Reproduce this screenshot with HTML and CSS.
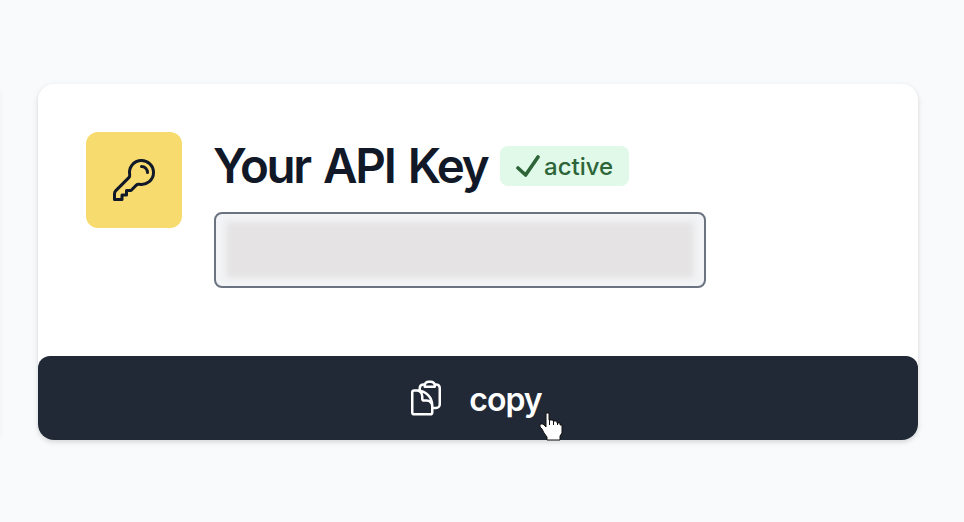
FILE: index.html
```html
<!DOCTYPE html>
<html lang="en">
<head>
    <meta charset="UTF-8">
    <meta name="viewport" content="width=device-width, initial-scale=1.0">
    <title>Your API Key</title>
    <link rel="stylesheet" href="styles.css">
</head>
<body>
    <div class="previous-card"></div>
    <div class="card">
        <div class="card-body">
            <div class="key-tile">
                <svg class="key-icon" viewBox="0 0 24 24" fill="none" stroke="currentColor" stroke-width="1.5" stroke-linecap="round" stroke-linejoin="round">
                    <path d="M15.75 5.25a3 3 0 013 3m3 0a6 6 0 01-7.029 5.912c-.563-.097-1.159.026-1.563.43L10.5 17.25H8.25v2.25H6v2.25H2.25v-2.818c0-.597.237-1.17.659-1.591l6.499-6.499c.404-.404.527-1 .43-1.563A6 6 0 1121.75 8.25z"/>
                </svg>
            </div>
            <div class="details">
                <div class="heading">
                    <h1>Your API Key</h1>
                    <span class="badge">
                        <svg class="check-icon" viewBox="0 0 24 24" fill="none" stroke="currentColor" stroke-width="3.6" stroke-linecap="round" stroke-linejoin="round">
                            <path d="M2 14l7.6 7L22 3"/>
                        </svg>
                        <span>active</span>
                    </span>
                </div>
                <div class="key-field">
                    <div class="key-mask"></div>
                </div>
            </div>
        </div>
        <button class="copy-button" type="button">
            <svg class="copy-icon" viewBox="0 0 24 24" fill="none" stroke="currentColor" stroke-width="1.5" stroke-linecap="round" stroke-linejoin="round">
                <path d="M8.25 7.5V6.108c0-1.135.845-2.098 1.976-2.192.373-.03.748-.057 1.123-.08M15.75 18H18a2.25 2.25 0 002.25-2.25V6.108c0-1.135-.845-2.098-1.976-2.192a48.424 48.424 0 00-1.123-.08M15.75 18.75v-1.875a3.375 3.375 0 00-3.375-3.375h-1.5a1.125 1.125 0 01-1.125-1.125v-1.5A3.375 3.375 0 006.375 7.5H5.25m11.9-3.664A2.251 2.251 0 0015 2.25h-1.5a2.251 2.251 0 00-2.15 1.586m5.8 0c.065.21.1.433.1.664v.75h-6V4.5c0-.231.035-.454.1-.664M6.75 7.5H4.875c-.621 0-1.125.504-1.125 1.125v12c0 .621.504 1.125 1.125 1.125h9.75c.621 0 1.125-.504 1.125-1.125V16.5a9 9 0 00-9-9z"/>
            </svg>
            <span>copy</span>
        </button>
    </div>
    <svg class="cursor" viewBox="0 0 24 30">
        <path d="M7 1h3v7h4v1h4v2h3v2h2v8l-2 3v4H8v-3l-3-4-2-4-2-2v-3h3l3 3z" fill="#fff" stroke="#111" stroke-width="1"/>
        <path d="M10.5 8v5M14.5 9v4M18.5 11v2" fill="none" stroke="#111" stroke-width="1"/>
    </svg>
</body>
</html>
```

FILE: styles.css
```css
* {
    box-sizing: border-box;
}
body {
    margin: 0;
    height: 522px;
    padding: 84px 46px 82px 38px;
    overflow: hidden;
    position: relative;
    background-color: #f9fafc;
    font-family: Inter, sans-serif;
    color: #111827;
}
/* edge of the neighbouring card, its shadow only */
.previous-card {
    position: absolute;
    left: -22px;
    top: 84px;
    width: 20px;
    height: 356px;
    border-radius: 16px;
    box-shadow: 0 2px 6px rgba(0, 0, 0, 0.1);
}
.card {
    display: flex;
    flex-direction: column;
    height: 356px;
    background-color: #fff;
    border-radius: 16px;
    box-shadow: 0 2px 6px rgba(0, 0, 0, 0.1), 0 2px 4px rgba(0, 0, 0, 0.06);
}
.card-body {
    display: flex;
    flex: 1;
    gap: 32px;
    padding: 48px;
}
.key-tile {
    display: flex;
    align-items: center;
    justify-content: center;
    width: 96px;
    height: 96px;
    border-radius: 12px;
    background-color: #f7db6e;
}
.key-icon {
    width: 48px;
    height: 48px;
}
.heading {
    display: flex;
    align-items: center;
    height: 68px;
}
h1 {
    width: 286px;
    margin: 0;
    font-size: 47.5px;
    line-height: 64px;
    font-weight: 640;
    letter-spacing: -2.3px;
    word-spacing: 3.5px;
    text-indent: -1px;
    white-space: nowrap;
}
.badge {
    display: flex;
    align-items: center;
    gap: 4px;
    height: 40px;
    padding: 0 16px;
    border-radius: 8px;
    background-color: #e0f9e8;
    color: #2d6539;
    font-size: 24px;
    font-weight: 500;
}
.check-icon {
    width: 24px;
    height: 24px;
}
.key-field {
    width: 492px;
    height: 76px;
    margin-top: 12px;
    padding: 8px 10px;
    border: 2px solid #6b7280;
    border-radius: 8px;
    background-color: #f3f4f6;
}
.key-mask {
    height: 100%;
    background-color: #e5e3e4;
    filter: blur(3px);
}
.copy-button {
    display: flex;
    align-items: center;
    justify-content: center;
    gap: 23px;
    height: 84px;
    padding: 2px 8px 0 0;
    border: none;
    border-radius: 12px 12px 16px 16px;
    background-color: #222936;
    color: #fff;
    font-family: inherit;
    font-size: 32px;
    font-weight: 570;
    letter-spacing: -1px;
    cursor: pointer;
}
.copy-icon {
    width: 40px;
    height: 40px;
    margin-top: -2px;
}
.cursor {
    position: absolute;
    left: 539px;
    top: 412px;
    width: 24px;
    height: 30px;
}
```
